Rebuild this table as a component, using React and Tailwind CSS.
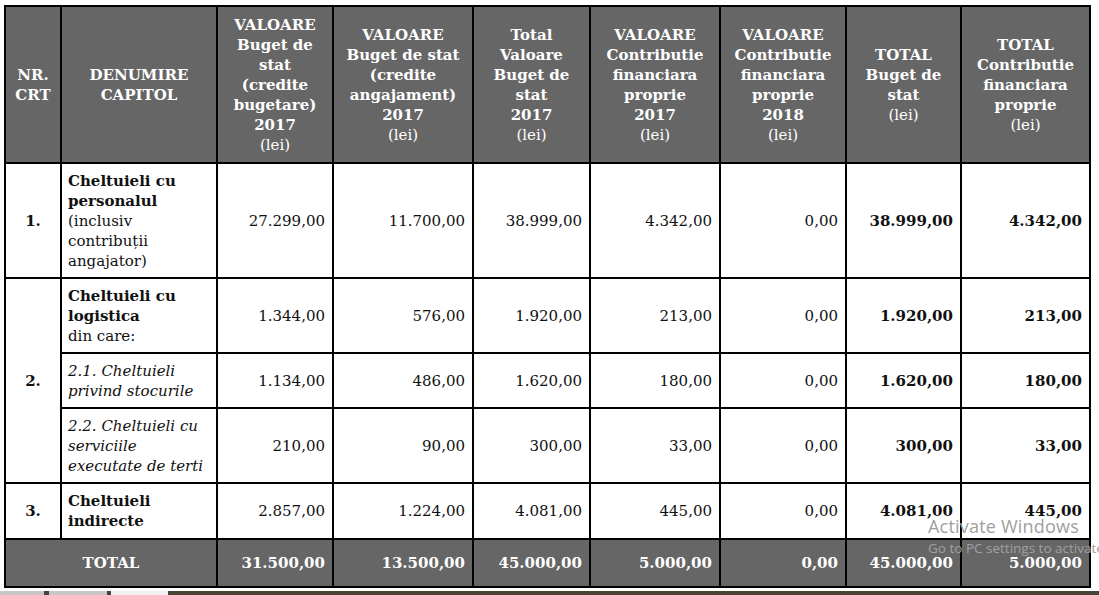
import React from 'react';

const cols = [56, 156, 116, 140, 117, 130, 126, 115, 129];

const headers = [
    ['NR.', 'CRT'],
    ['DENUMIRE', 'CAPITOL'],
    ['VALOARE', 'Buget de', 'stat', '(credite', 'bugetare)', '2017'],
    ['VALOARE', 'Buget de stat', '(credite', 'angajament)', '2017'],
    ['Total', 'Valoare', 'Buget de', 'stat', '2017'],
    ['VALOARE', 'Contributie', 'financiara', 'proprie', '2017'],
    ['VALOARE', 'Contributie', 'financiara', 'proprie', '2018'],
    ['TOTAL', 'Buget de', 'stat'],
    ['TOTAL', 'Contributie', 'financiara', 'proprie'],
];

const rows = [
    { nr: '1.', h: 'h-[115px]', vals: ['27.299,00', '11.700,00', '38.999,00', '4.342,00', '0,00', '38.999,00', '4.342,00'] },
    { nr: '2.', span: 3, h: 'h-[75px]', vals: ['1.344,00', '576,00', '1.920,00', '213,00', '0,00', '1.920,00', '213,00'] },
    { h: 'h-[55px]', vals: ['1.134,00', '486,00', '1.620,00', '180,00', '0,00', '1.620,00', '180,00'] },
    { h: 'h-[75px]', vals: ['210,00', '90,00', '300,00', '33,00', '0,00', '300,00', '33,00'] },
    { nr: '3.', h: 'h-[56px]', vals: ['2.857,00', '1.224,00', '4.081,00', '445,00', '0,00', '4.081,00', '445,00'] },
];

const labels = [
    <>
        <div className="font-bold">Cheltuieli cu<br />personalul</div>
        <div>(inclusiv<br />contribuții<br />angajator)</div>
    </>,
    <>
        <div className="font-bold">Cheltuieli cu<br />logistica</div>
        <div>din care:</div>
    </>,
    <div className="italic">2.1. Cheltuieli<br />privind stocurile</div>,
    <div className="italic">2.2. Cheltuieli cu<br />serviciile<br />executate de terti</div>,
    <div className="font-bold">Cheltuieli<br />indirecte</div>,
];

const totals = ['31.500,00', '13.500,00', '45.000,00', '5.000,00', '0,00', '45.000,00', '5.000,00'];

const cell = 'border-2 border-black';

export default function App() {
    return (
        <div className="relative h-[595px] w-[1099px] overflow-hidden bg-white font-['DejaVu_Serif',serif] text-[15px] leading-5 text-[#111]">
            <div className="pl-[4px] pt-[5px]">
                <table className="table-fixed border-collapse" style={{ width: 1087 }}>
                    <colgroup>
                        {cols.map((w, i) => (
                            <col key={i} style={{ width: w }} />
                        ))}
                    </colgroup>
                    <thead>
                        <tr className="h-[157px] bg-[#666666] text-white">
                            {headers.map((lines, i) => (
                                <th key={i} className={`${cell} px-1 text-center align-middle`}>
                                    {lines.map((l, j) => (
                                        <div key={j} className="font-bold">{l}</div>
                                    ))}
                                    {i > 1 && <div className="font-normal">(lei)</div>}
                                </th>
                            ))}
                        </tr>
                    </thead>
                    <tbody>
                        {rows.map((r, i) => (
                            <tr key={i} className={r.h}>
                                {r.nr && (
                                    <td rowSpan={r.span || 1} className={`${cell} text-center align-middle font-bold`}>
                                        {r.nr}
                                    </td>
                                )}
                                <td className={`${cell} pl-[6px] pr-1 align-middle`}>{labels[i]}</td>
                                {r.vals.map((v, j) => (
                                    <td key={j} className={`${cell} pr-[7px] text-right align-middle ${j > 4 ? 'font-bold' : ''}`}>
                                        {v}
                                    </td>
                                ))}
                            </tr>
                        ))}
                        <tr className="h-[48px] bg-[#666666] font-bold text-white">
                            <td colSpan={2} className={`${cell} text-center align-middle`}>TOTAL</td>
                            {totals.map((v, j) => (
                                <td key={j} className={`${cell} pr-[7px] text-right align-middle`}>{v}</td>
                            ))}
                        </tr>
                    </tbody>
                </table>
            </div>

            <div className="absolute bottom-0 left-0 flex h-[4px] w-full bg-[#4b4336]">
                <div className="w-[44px] bg-[#c8c8c8]" />
                <div className="ml-[5px] w-[58px] bg-[#c8c8c8]" />
                <div className="ml-[4px] w-[57px] bg-[#f0f0f0]" />
            </div>

            {/* watermark laid over the table */}
            <div className="pointer-events-none absolute left-[928px] top-[514px] w-[200px] font-['Open_Sans',sans-serif] text-[#a0a0a0]">
                <div className="whitespace-nowrap text-[18px] leading-6 tracking-[0.2px]">Activate Windows</div>
                <div className="whitespace-nowrap text-[13.5px] leading-5">Go to PC settings to activate Windows.</div>
            </div>
        </div>
    );
}
